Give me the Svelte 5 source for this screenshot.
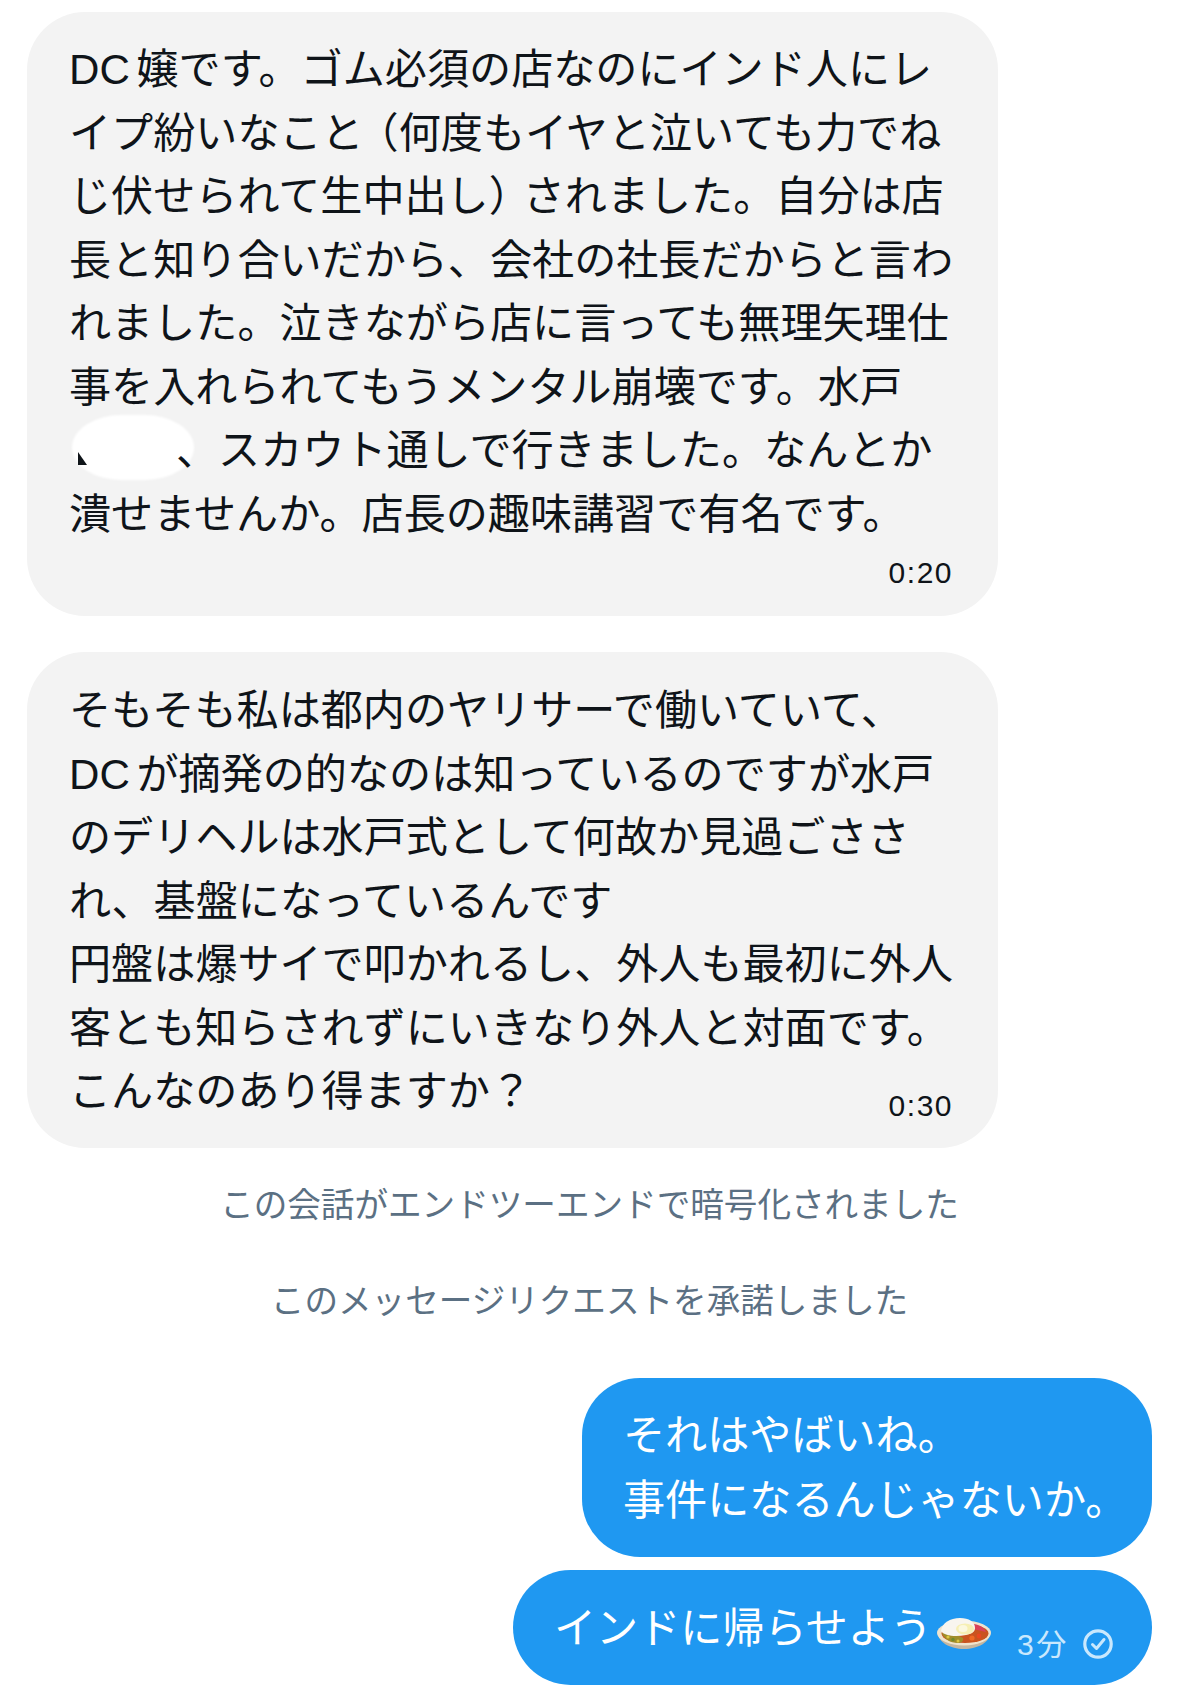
<script>
  const second = [
    'そもそも私は都内のヤリサーで働いていて、',
    'DC が摘発の的なのは知っているのですが水戸',
    'のデリヘルは水戸式として何故か見過ごささ',
    'れ、基盤になっているんです',
    '円盤は爆サイで叩かれるし、外人も最初に外人',
    '客とも知らされずにいきなり外人と対面です。'
  ];
</script>

<div class="thread">
  <div class="bubble in first">
    <div>DC 嬢です。ゴム必須の店なのにインド人にレ</div>
    <div>イプ紛いなこと<span class="open">（</span>何度もイヤと泣いても力でね</div>
    <div>じ伏せられて生中出し<span class="close">）</span>されました。自分は店</div>
    <div>長と知り合いだから、会社の社長だからと言わ</div>
    <div>れました。泣きながら店に言っても無理矢理仕</div>
    <div>事を入れられてもうメンタル崩壊です。水戸</div>
    <div class="masked">
      <span class="blot"></span>
      <span class="scrap"></span>
      <span class="gap"></span><span class="comma">、</span>スカウト通しで行きました。なんとか
    </div>
    <div>潰せませんか。店長の趣味講習で有名です。</div>
    <div class="time block">0:20</div>
  </div>

  <div class="bubble in second">
    {#each second as line}
      <div>{line}</div>
    {/each}
    <div class="last">
      <span>こんなのあり得ますか？</span>
      <span class="time">0:30</span>
    </div>
  </div>

  <div class="notice one">この会話がエンドツーエンドで暗号化されました</div>
  <div class="notice two">このメッセージリクエストを承諾しました</div>

  <div class="bubble out top">
    <div>それはやばいね。</div>
    <div>事件になるんじゃないか。</div>
  </div>

  <div class="bubble out bottom">
    <span>インドに帰らせよう</span>
    <svg class="curry" viewBox="0 0 54 31" width="54" height="31" role="img" aria-label="カレー">
      <path d="M1 15c0 9 12 16 26 16s26-7 26-16z" fill="#c4b6a0" />
      <ellipse cx="27" cy="15" rx="27" ry="12.500" fill="#efe3cd" />
      <ellipse cx="28" cy="15.500" rx="23.500" ry="9.500" fill="#c9541f" />
      <path d="M5 15c5 0 15 1 21 5 1 3-2 5-5 5-8 0-14-4-16-10z" fill="#a08d2a" />
      <circle cx="11" cy="19" r="1.600" fill="#dcc63f" />
      <circle cx="16" cy="21.500" r="1.700" fill="#6f8a2c" />
      <circle cx="21" cy="23" r="1.500" fill="#dcc63f" />
      <circle cx="35" cy="20" r="2.600" fill="#ef6a24" />
      <circle cx="42" cy="18" r="2.400" fill="#e8481f" />
      <path d="M36 6c6 .5 11 3 13 8-4-1-9-2-13-3z" fill="#d9425a" />
      <path d="M4 13C5 5 13 0 23 0c9 0 15 4 15 10 0 4-4 6-9 7-10 2-22 1-25-4z" fill="#f8f5ef" />
      <ellipse cx="28" cy="11" rx="9" ry="5.500" fill="#f6efb4" />
      <ellipse cx="26" cy="10.500" rx="4.500" ry="3.500" fill="#fbf8df" />
    </svg>
    <span class="meta">3分</span>
    <svg class="check" viewBox="0 0 30 30" width="30" height="30" fill="none" stroke="currentColor" role="img" aria-label="既読">
      <circle cx="15" cy="15" r="13.200" stroke-width="3.200" />
      <path d="M9.500 15.500l4 4 7.500-9" stroke-width="3" stroke-linecap="round" stroke-linejoin="round" />
    </svg>
  </div>
</div>

<style>
  :global(body) {
    background: #fff;
  }

  .thread {
    box-sizing: border-box;
    display: flex;
    flex-direction: column;
    font-family: "Liberation Sans", "Noto Sans CJK JP", sans-serif;
    font-size: 42.100px;
    height: 1701px;
    overflow: hidden;
    padding: 12px 27px 0;
  }

  .bubble {
    border-radius: 58px;
    box-sizing: border-box;
    white-space: nowrap;
  }

  .in {
    background: #f3f3f3;
    color: #0f1419;
    line-height: 63.500px;
    padding: 26px 45px 25px 42px;
    width: 971px;
    word-spacing: -5px;
  }

  .second {
    margin-top: 36px;
    padding-bottom: 24px;
    padding-top: 27px;
  }

  /* half-width brackets: the reference sets them tighter than a full cell */
  .open {
    font-feature-settings: "halt";
    margin-left: 14px;
  }

  .close {
    font-feature-settings: "halt";
    margin-right: 13px;
  }

  .masked {
    position: relative;
  }

  .gap {
    display: inline-block;
    width: 107px;
  }

  .comma {
    position: relative;
  }

  .blot {
    background: #fff;
    border-radius: 52px / 34px;
    filter: blur(1px);
    height: 65px;
    left: 3px;
    position: absolute;
    top: -4px;
    width: 122px;
  }

  .scrap {
    border-bottom: 13px solid #0f1419;
    border-right: 9px solid transparent;
    height: 0;
    left: 9px;
    position: absolute;
    top: 33px;
    width: 0;
  }

  .time {
    font-size: 30px;
    letter-spacing: 1.500px;
    line-height: 36px;
  }

  .block {
    margin-top: 9px;
    text-align: right;
  }

  .last {
    align-items: flex-end;
    display: flex;
    justify-content: space-between;
  }

  .notice {
    color: #5b7083;
    font-size: 33.600px;
    line-height: 48px;
    text-align: center;
  }

  .one {
    margin-top: 34px;
  }

  .two {
    margin-top: 48px;
  }

  .out {
    align-self: flex-end;
    background: #1f98f1;
    color: #fff;
    line-height: 65px;
  }

  .top {
    margin-top: 52px;
    padding: 25px 22px 24px 41px;
    width: 570px;
  }

  .bottom {
    align-items: center;
    display: flex;
    margin-top: 13px;
    padding: 26px 37px 24px 41px;
    width: 639px;
  }

  .curry {
    flex: none;
    margin: 10px 0 0 5px;
  }

  .meta {
    align-self: flex-end;
    color: #c9e8fd;
    font-size: 30px;
    letter-spacing: 2.500px;
    line-height: 36px;
    margin: 0 0 -2px 26px;
  }

  .check {
    align-self: flex-end;
    color: #c9e8fd;
    flex: none;
    margin: 0 0 2px 14px;
  }
</style>
